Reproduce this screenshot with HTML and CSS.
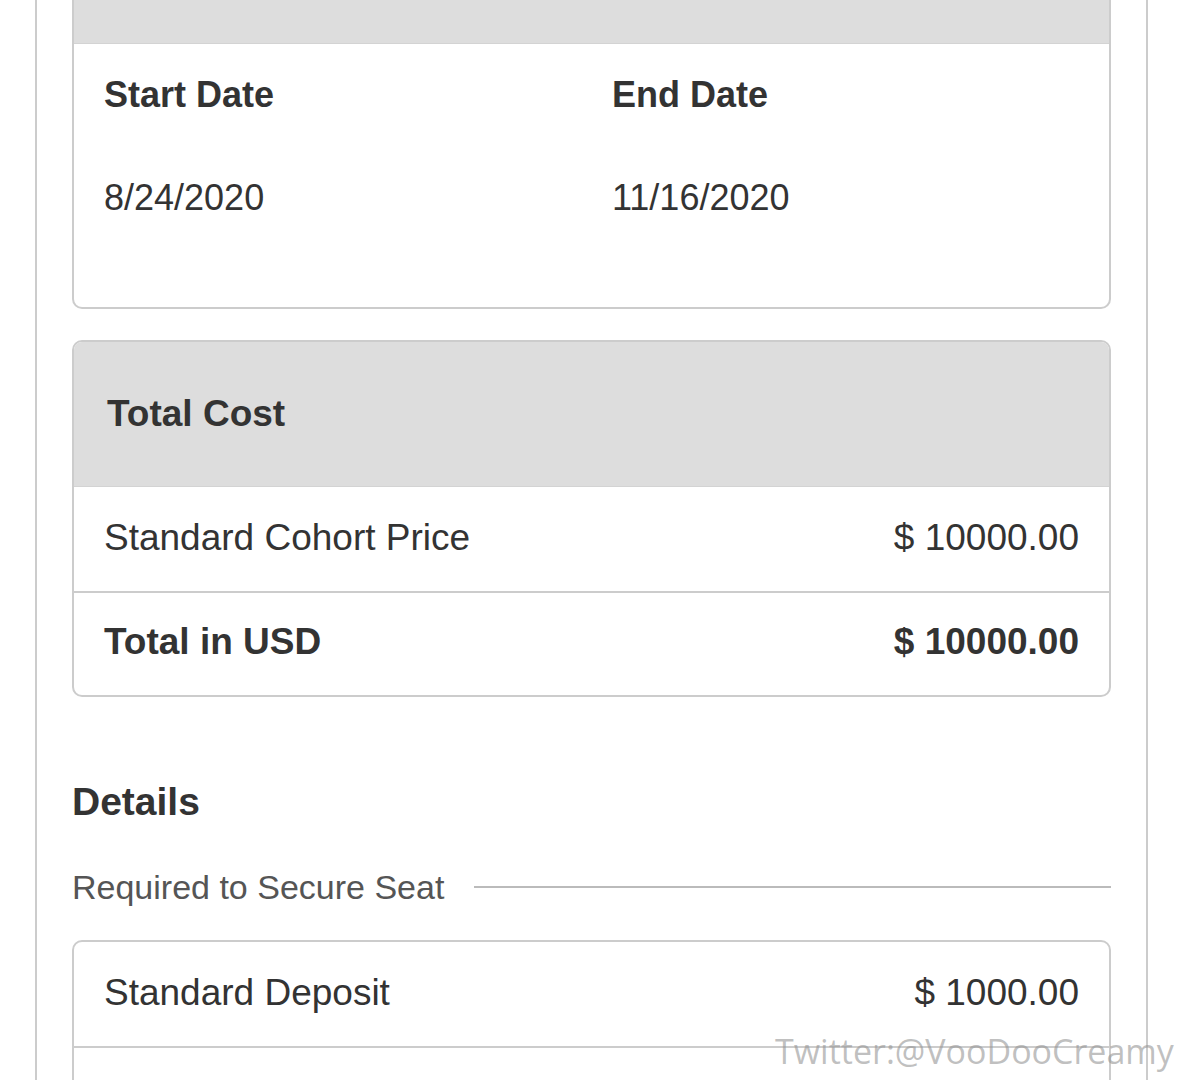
FILE: index.html
```html
<!DOCTYPE html>
<html lang="en">
<head>
  <meta charset="UTF-8">
  <meta name="viewport" content="width=device-width, initial-scale=1.0">
  <title>Cohort Checkout</title>
  <link rel="stylesheet" href="styles.css">
</head>
<body>

  <div class="page">

    <div class="card dates">
      <div class="cardHead"></div>
      <div class="dateGrid">
        <div class="dateLabel">Start Date</div>
        <div class="dateLabel">End Date</div>
        <div class="dateValue">8/24/2020</div>
        <div class="dateValue">11/16/2020</div>
      </div>
    </div>

    <div class="card cost">
      <div class="cardHead">Total Cost</div>
      <div class="row">
        <span>Standard Cohort Price</span>
        <span>$ 10000.00</span>
      </div>
      <div class="row total">
        <span>Total in USD</span>
        <span>$ 10000.00</span>
      </div>
    </div>

    <h3 class="sectionTitle">Details</h3>

    <div class="divider">
      <span>Required to Secure Seat</span>
    </div>

    <div class="card deposit">
      <div class="row">
        <span>Standard Deposit</span>
        <span>$ 1000.00</span>
      </div>
      <div class="row"></div>
    </div>

  </div>

  <div class="watermark">Twitter:@VooDooCreamy</div>

</body>
</html>
```

FILE: styles.css
```css
body {
  font-family: "Liberation Sans", Arial, sans-serif;
  margin: 0;
  background-color: white;
  color: #333;
  overflow: hidden;
}

.page {
  margin-left: 35px;
  width: 1113px;
  height: 1080px;
  overflow: hidden;
  border-left: 2px solid #ccc;
  border-right: 2px solid #ccc;
  padding: 0 35px;
  box-sizing: border-box;
}

.card {
  border: 2px solid #ccc;
  border-radius: 10px;
  overflow: hidden;
  background-color: white;
}

.cardHead {
  background-color: #ddd;
  border-bottom: 1px solid #d3d3d3;
  font-size: 37px;
  font-weight: bold;
  line-height: 44px;
}

/* dates card is cut off at the top of the screen */
.dates {
  border-top: none;
  border-radius: 0 0 10px 10px;
}

.dates .cardHead {
  height: 43px;
}

.dateGrid {
  display: grid;
  grid-template-columns: 508px 1fr;
  row-gap: 59px;
  padding: 29px 30px 87px;
}

.dateLabel {
  font-size: 36px;
  font-weight: bold;
  line-height: 44px;
}

.dateValue {
  font-size: 36px;
  line-height: 44px;
}

.cost {
  margin-top: 31px;
}

.cost .cardHead {
  padding: 50px 33px 50px;
}

.row {
  display: flex;
  justify-content: space-between;
  font-size: 37px;
  line-height: 44px;
  padding: 29px 30px 31px;
  min-height: 44px;
}

.row + .row {
  border-top: 2px solid #ccc;
}

.row.total {
  font-weight: bold;
  padding: 27px 30px 31px;
}

.sectionTitle {
  font-size: 39px;
  line-height: 46px;
  margin: 82px 0 0;
}

.divider {
  display: flex;
  align-items: center;
  gap: 30px;
  margin-top: 42px;
  font-size: 34px;
  line-height: 40px;
  color: #555;
}

.divider::after {
  content: "";
  flex: 1;
  height: 2px;
  background-color: #bbb;
}

.deposit {
  margin-top: 33px;
}

.watermark {
  position: absolute;
  left: 775px;
  top: 1028px;
  font-family: "Open Sans", sans-serif;
  font-size: 34px;
  color: rgba(150, 150, 150, 0.6);
}
```
